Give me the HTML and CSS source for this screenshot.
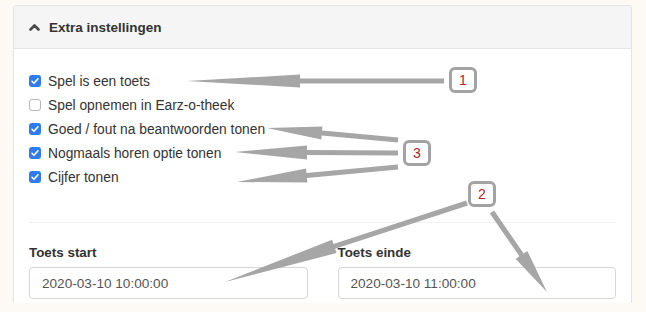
FILE: index.html
```html
<!DOCTYPE html>
<html lang="nl">
<head>
<meta charset="utf-8">
<title>Extra instellingen</title>
<link rel="stylesheet" href="styles.css">
</head>
<body>
<div class="card">
  <div class="card-header">
    <svg class="chevron" width="11" height="8" viewBox="0 0 11 8"><path d="M1.5 6.5 L5.5 2.5 L9.5 6.5" fill="none" stroke="#4a4a4a" stroke-width="2.6" stroke-linecap="round" stroke-linejoin="round"/></svg>
    <span class="title">Extra instellingen</span>
  </div>
  <div class="card-body">
    <div class="checks">
      <label class="check"><span class="box on"><svg viewBox="0 0 12 12" width="12" height="12"><path d="M3 6.3 L5 8.3 L9 3.8" fill="none" stroke="#fff" stroke-width="1.6" stroke-linecap="round" stroke-linejoin="round"/></svg></span>Spel is een toets</label>
      <label class="check"><span class="box"></span>Spel opnemen in Earz-o-theek</label>
      <label class="check"><span class="box on"><svg viewBox="0 0 12 12" width="12" height="12"><path d="M3 6.3 L5 8.3 L9 3.8" fill="none" stroke="#fff" stroke-width="1.6" stroke-linecap="round" stroke-linejoin="round"/></svg></span>Goed / fout na beantwoorden tonen</label>
      <label class="check"><span class="box on"><svg viewBox="0 0 12 12" width="12" height="12"><path d="M3 6.3 L5 8.3 L9 3.8" fill="none" stroke="#fff" stroke-width="1.6" stroke-linecap="round" stroke-linejoin="round"/></svg></span>Nogmaals horen optie tonen</label>
      <label class="check"><span class="box on"><svg viewBox="0 0 12 12" width="12" height="12"><path d="M3 6.3 L5 8.3 L9 3.8" fill="none" stroke="#fff" stroke-width="1.6" stroke-linecap="round" stroke-linejoin="round"/></svg></span>Cijfer tonen</label>
    </div>
    <div class="sep"></div>
    <div class="fields">
      <div class="field">
        <div class="label">Toets start</div>
        <div class="input">2020-03-10 10:00:00</div>
      </div>
      <div class="field">
        <div class="label">Toets einde</div>
        <div class="input">2020-03-10 11:00:00</div>
      </div>
    </div>
  </div>
</div>

<svg class="arrows" width="646" height="312" viewBox="0 0 646 312">
  <g fill="#a6a6a6">
    <polygon points="444,78.5 300,78.5 300,74.5 187,81 300,87.5 300,83.5 444,83.5"/>
    <polygon points="398.2,137.5 322,130.5 322.4,126.5 267,128 321.3,139.5 321.6,135.5 397.8,142.5"/>
    <polygon points="398,150.5 307,150 307,145.5 235,152 307,159.5 307,155 398,155.5"/>
    <polygon points="397.8,164.5 306.5,173 306,168.5 237,182 307.3,182.5 306.9,178 398.2,169.5"/>
    <polygon points="466.2,200.6 333.5,243.9 332.1,239.7 225,282 336.5,253 335.1,248.7 467.8,205.4"/>
    <polygon points="489.9,213.4 519.4,256.3 515.7,258.9 547,292 527.3,250.9 523.6,253.5 494.1,210.6"/>
  </g>
</svg>
<div class="badge b1">1</div>
<div class="badge b3">3</div>
<div class="badge b2">2</div>
</body>
</html>
```

FILE: styles.css
```css
html, body {
  margin: 0;
  padding: 0;
}
body {
  background: #fdf9f5;
  width: 646px;
  height: 312px;
  overflow: hidden;
  position: relative;
  font-family: "Liberation Sans", Arial, Helvetica, sans-serif;
  color: #333;
}
.card {
  margin: 5px 0 0 13px;
  width: 617px;
  height: 297px;
  overflow: hidden;
  background: #fff;
  border: 1px solid #e4e4e4;
  border-bottom: none;
  border-radius: 4px 4px 0 0;
}
.card-header {
  height: 42px;
  background: #f5f5f5;
  border-bottom: 1px solid #e6e6e6;
  display: flex;
  align-items: center;
  padding-left: 15px;
}
.chevron {
  margin-right: 9px;
  margin-top: -1px;
}
.title {
  font-size: 13.5px;
  font-weight: bold;
  color: #333;
}
.card-body {
  padding: 20px 15px 0 15px;
}
.checks {
  display: flex;
  flex-direction: column;
}
.check {
  height: 24px;
  display: flex;
  align-items: center;
  font-size: 13.8px;
  color: #333;
}
.box {
  width: 10px;
  height: 10px;
  border: 1px solid #b8b8b8;
  border-radius: 3px;
  background: #fff;
  margin-right: 7px;
  box-sizing: content-box;
  display: flex;
  align-items: center;
  justify-content: center;
}
.box.on {
  width: 12px;
  height: 12px;
  border: none;
  background: #2f7bf0;
}
.sep {
  height: 1px;
  background: #efefef;
  margin-top: 33px;
}
.fields {
  display: flex;
  gap: 30px;
  margin-top: 22px;
}
.field {
  width: 279px;
}
.label {
  font-size: 13.4px;
  font-weight: bold;
  color: #333;
  line-height: 15px;
}
.input {
  margin-top: 7px;
  height: 30px;
  border: 1px solid #d6d6d6;
  border-radius: 4px;
  display: flex;
  align-items: center;
  padding-left: 12px;
  font-size: 13.6px;
  color: #555;
}
.arrows {
  position: absolute;
  left: 0;
  top: 0;
}
.badge {
  position: absolute;
  width: 22px;
  height: 20px;
  border: 3px solid #a3a3a3;
  border-radius: 6px;
  background: #fff;
  color: #b3262b;
  font-size: 14px;
  line-height: 20px;
  text-align: center;
}
.b1 { left: 449px; top: 67px; }
.b3 { left: 403px; top: 140px; }
.b2 { left: 468px; top: 181px; }
```
